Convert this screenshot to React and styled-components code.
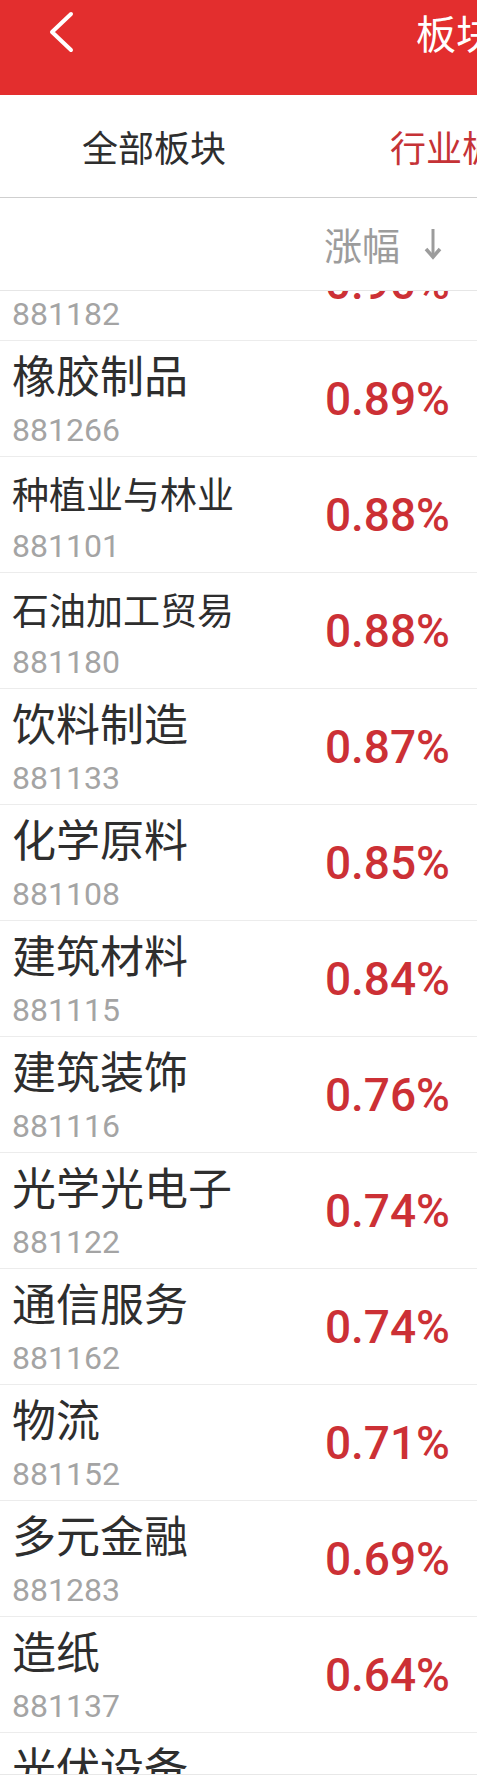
import React from 'react';
import styled, { createGlobalStyle } from 'styled-components';

const GlobalStyle = createGlobalStyle`
  html, body {
    margin: 0;
    padding: 0;
    background: #ffffff;
  }
  body {
    font-family: "Noto Sans CJK SC", "Noto Sans", sans-serif;
  }
`;

const Page = styled.div`
  width: 477px;
  height: 1785px;
  display: flex;
  flex-direction: column;
  overflow: hidden;
  background: #ffffff;
`;

const Header = styled.header`
  height: 64px;
  padding-bottom: 31px;
  background: #e32e2e;
  display: flex;
  align-items: center;
  overflow: hidden;
  flex-shrink: 0;
`;

const BackArea = styled.div`
  width: 416px;
  flex-shrink: 0;
  padding-left: 48px;
  box-sizing: border-box;
  display: flex;
  align-items: center;
`;

const Title = styled.h1`
  margin: 0;
  font-size: 40px;
  line-height: 40px;
  font-weight: 400;
  color: #ffffff;
  white-space: nowrap;
  flex-shrink: 0;
`;

const Tabs = styled.nav`
  height: 102px;
  display: flex;
  border-bottom: 1px solid #cfcfcf;
  overflow: hidden;
  flex-shrink: 0;
`;

const Tab = styled.div`
  width: 308px;
  flex-shrink: 0;
  display: flex;
  align-items: center;
  justify-content: center;
  font-size: 36px;
  white-space: nowrap;
  color: ${(p) => (p.$active ? '#c53236' : '#2e2e2e')};
`;

const SortBar = styled.div`
  height: 92px;
  display: flex;
  align-items: center;
  justify-content: flex-end;
  gap: 24px;
  padding-right: 35px;
  border-bottom: 1px solid #e6e6e6;
  flex-shrink: 0;
`;

const SortLabel = styled.span`
  font-size: 38px;
  line-height: 38px;
  color: #9c9c9c;
`;

const List = styled.div`
  height: 1483px;
  overflow: hidden;
  border-bottom: 1px solid #e8e8e8;
  flex-shrink: 0;
`;

const ListInner = styled.div`
  margin-top: -66px;
`;

const Row = styled.div`
  height: 116px;
  box-sizing: border-box;
  border-bottom: 1px solid #ececec;
  display: flex;
  align-items: center;
  justify-content: space-between;
  padding: 0 27px 0 12px;
`;

const Info = styled.div`
  display: flex;
  flex-direction: column;
  gap: 18px;
`;

const Name = styled.div`
  font-size: 44px;
  line-height: 44px;
  height: 44px;
  color: #2e2e2e;
  white-space: nowrap;
`;

const NameText = styled.span`
  font-size: ${(p) => p.$size}px;
`;

const Code = styled.div`
  font-family: Roboto, "Noto Sans", sans-serif;
  font-size: 32px;
  line-height: 32px;
  color: #a4a4a4;
`;

const Change = styled.div`
  font-family: Roboto, "Noto Sans", sans-serif;
  font-weight: 500;
  font-size: 46px;
  line-height: 46px;
  color: #cc3035;
`;

const rows = [
  { name: '汽车服务', code: '881182', change: '0.90%' },
  { name: '橡胶制品', code: '881266', change: '0.89%' },
  { name: '种植业与林业', code: '881101', change: '0.88%' },
  { name: '石油加工贸易', code: '881180', change: '0.88%' },
  { name: '饮料制造', code: '881133', change: '0.87%' },
  { name: '化学原料', code: '881108', change: '0.85%' },
  { name: '建筑材料', code: '881115', change: '0.84%' },
  { name: '建筑装饰', code: '881116', change: '0.76%' },
  { name: '光学光电子', code: '881122', change: '0.74%' },
  { name: '通信服务', code: '881162', change: '0.74%' },
  { name: '物流', code: '881152', change: '0.71%' },
  { name: '多元金融', code: '881283', change: '0.69%' },
  { name: '造纸', code: '881137', change: '0.64%' },
  { name: '光伏设备', code: '881279', change: '0.63%' },
];

const BackIcon = () => (
  <svg width="26" height="42" viewBox="0 0 26 42" fill="none">
    <polyline
      points="23,3 4,21 23,39"
      stroke="#ffffff"
      strokeWidth="4"
      strokeLinecap="round"
      strokeLinejoin="round"
    />
  </svg>
);

const DownArrow = () => (
  <svg width="18" height="32" viewBox="0 0 18 32" fill="none">
    <line x1="9" y1="1" x2="9" y2="29" stroke="#9c9c9c" strokeWidth="3" />
    <polyline
      points="2,21 9,29 16,21"
      stroke="#9c9c9c"
      strokeWidth="3.5"
      strokeLinejoin="miter"
    />
  </svg>
);

export default function App() {
  return (
    <Page>
      <GlobalStyle />
      <Header>
        <BackArea>
          <BackIcon />
        </BackArea>
        <Title>板块排行</Title>
      </Header>
      <Tabs>
        <Tab>全部板块</Tab>
        <Tab $active>行业板块</Tab>
        <Tab>概念板块</Tab>
      </Tabs>
      <SortBar>
        <SortLabel>涨幅</SortLabel>
        <DownArrow />
      </SortBar>
      <List>
        <ListInner>
          {rows.map((r) => (
            <Row key={r.code}>
              <Info>
                <Name>
                  <NameText $size={r.name.length > 5 ? 37 : 44}>{r.name}</NameText>
                </Name>
                <Code>{r.code}</Code>
              </Info>
              <Change>{r.change}</Change>
            </Row>
          ))}
        </ListInner>
      </List>
    </Page>
  );
}
